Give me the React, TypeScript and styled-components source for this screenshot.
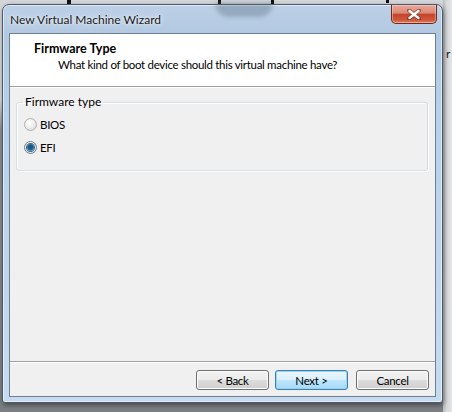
import React from "react";
import styled, { createGlobalStyle } from "styled-components";

const GlobalStyle = createGlobalStyle`
  html, body { margin: 0; padding: 0; }
  body { background: #cfd6de; }
  * { box-sizing: border-box; }
`;

const FONT = `Lato, "Noto Sans", "Liberation Sans", sans-serif`;

const Desktop = styled.div`
  position: relative;
  width: 452px;
  height: 412px;
  overflow: hidden;
  padding: 4px 0 0 2px;
  background:
    linear-gradient(90deg, transparent 0, transparent 443px, #b9bcc0 443px, #d9dadb 447px, #e4e5e6 452px),
    linear-gradient(180deg, #d3d6da 0, #d3d6da 100px, #8d9094 130px, #7c7f83 412px);
  font-family: ${FONT};
`;

const Mark = styled.div<{ $x: number; $w: number; $h: number }>`
  position: absolute;
  top: 0;
  left: ${(p) => p.$x}px;
  width: ${(p) => p.$w}px;
  height: ${(p) => p.$h}px;
  background: #111;
`;

const SideText = styled.div`
  position: absolute;
  left: 446px;
  top: 46px;
  font-size: 12px;
  color: #222;
`;

const Window = styled.div`
  position: relative;
  width: 441px;
  height: 399px;
  border: 1px solid #4e5a66;
  border-radius: 7px 7px 3px 3px;
  background: linear-gradient(180deg, #bcd0e6 0, #b2c9e2 30px, #b8d0ea 120px, #c7dbf0 400px);
  box-shadow: 1px 2px 5px rgba(0, 0, 0, 0.45), inset 0 0 0 1px rgba(255, 255, 255, 0.55);
  padding: 0 6px 5px 6px;
  display: flex;
  flex-direction: column;
`;

const TitleBar = styled.div`
  height: 28px;
  display: flex;
  align-items: flex-start;
  position: relative;
`;

const TitleText = styled.div`
  font-size: 12px;
  color: #1a1a1a;
  margin-top: 7px;
  margin-left: 1px;
  text-shadow: 0 0 8px rgba(255, 255, 255, 0.9), 0 0 3px rgba(255, 255, 255, 0.9);
`;

const GlassBlob = styled.div`
  position: absolute;
  left: 206px;
  top: -2px;
  width: 58px;
  height: 14px;
  border-radius: 0 0 14px 14px;
  background: rgba(80, 100, 120, 0.35);
  filter: blur(2px);
`;

const CloseButton = styled.div`
  margin-left: auto;
  margin-right: -1px;
  width: 46px;
  height: 19px;
  border: 1px solid #6b2a1f;
  border-top: none;
  border-radius: 0 0 5px 5px;
  background: linear-gradient(180deg, #e9a899 0, #dc8873 45%, #c4432b 52%, #cf5a3c 85%, #e2866a 100%);
  box-shadow: inset 0 0 0 1px rgba(255, 220, 210, 0.45);
  display: flex;
  align-items: center;
  justify-content: center;
`;

const Client = styled.div`
  flex: 1;
  background: #f0f0f0;
  border: 1px solid #6d7f93;
  display: flex;
  flex-direction: column;
`;

const Header = styled.div`
  background: #ffffff;
  height: 53px;
  border-bottom: 1px solid #a0a0a0;
  box-shadow: 0 1px 0 #ffffff;
  padding: 7px 0 0 24px;
`;

const HeaderTitle = styled.div`
  font-size: 12.5px;
  font-weight: bold;
  color: #000;
  line-height: 16px;
`;

const HeaderSub = styled.div`
  font-size: 11.5px;
  letter-spacing: -0.3px;
  color: #000;
  line-height: 16px;
  padding-left: 24px;
`;

const Body = styled.div`
  padding: 8px 7px 0 6px;
  flex: 1;
`;

const GroupBox = styled.fieldset`
  margin: 0;
  padding: 4px 0 12px 7px;
  border: 1px solid #d5dfe5;
  border-radius: 3px;
  box-shadow: inset 1px 1px 0 #ffffff, 1px 1px 0 #ffffff;
  height: 76px;
`;

const Legend = styled.legend`
  font-size: 12px;
  color: #000;
  padding: 0 2px;
  margin-left: -1px;
  line-height: 14px;
`;

const OptionRow = styled.label`
  display: flex;
  align-items: center;
  gap: 3px;
  height: 23px;
  font-size: 11.5px;
  letter-spacing: -0.3px;
  color: #000;
`;

const RadioCircle = styled.span<{ $checked?: boolean }>`
  width: 13px;
  height: 13px;
  border-radius: 50%;
  border: 1px solid ${(p) => (p.$checked ? "#6f8192" : "#b0b0b0")};
  background: radial-gradient(circle at 40% 35%, #ffffff 0, #f1f1f1 40%, #d6d6d6 100%);
  display: flex;
  align-items: center;
  justify-content: center;
`;

const RadioDot = styled.span`
  width: 7px;
  height: 7px;
  border-radius: 50%;
  background: radial-gradient(circle at 50% 40%, #1d4f77 0, #1d5f8f 45%, #6ab5df 100%);
  box-shadow: 0 0 0 1px #3b6a8c;
`;

const Separator = styled.div`
  height: 2px;
  border-top: 1px solid #a0a0a0;
  border-bottom: 1px solid #ffffff;
`;

const ButtonRow = styled.div`
  display: flex;
  justify-content: flex-end;
  gap: 6px;
  padding: 7px 6px 6px 0;
`;

const Button = styled.div<{ $default?: boolean; $gapRight?: number }>`
  width: 73px;
  height: 20px;
  border: 1px solid ${(p) => (p.$default ? "#3c7fb1" : "#707070")};
  border-radius: 3px;
  background: ${(p) =>
    p.$default
      ? "linear-gradient(180deg, #eaf6fd 0, #d9f0fc 50%, #bee6fd 51%, #a7d9f5 100%)"
      : "linear-gradient(180deg, #f2f2f2 0, #ebebeb 50%, #dddddd 51%, #cfcfcf 100%)"};
  box-shadow: inset 0 0 0 1px ${(p) => (p.$default ? "#98d3f2" : "#fcfcfc")};
  font-size: 11.5px;
  letter-spacing: -0.3px;
  color: #000;
  display: flex;
  align-items: center;
  justify-content: center;
  margin-right: ${(p) => p.$gapRight ?? 0}px;
`;

export default function App() {
  return (
    <>
      <GlobalStyle />
      <Desktop>
        <Mark $x={67} $w={4} $h={5} />
        <Mark $x={218} $w={3} $h={5} />
        <Mark $x={271} $w={3} $h={5} />
        <Mark $x={386} $w={3} $h={3} />
        <SideText>r</SideText>
        <Window>
          <TitleBar>
            <GlassBlob />
            <TitleText>New Virtual Machine Wizard</TitleText>
            <CloseButton>
              <svg width="14" height="11" viewBox="0 0 14 11">
                <path
                  d="M2 1.5 L12 9.5 M12 1.5 L2 9.5"
                  stroke="#5a1e14"
                  strokeWidth="4"
                  strokeLinecap="round"
                  opacity="0.55"
                />
                <path
                  d="M2.5 2 L11.5 9 M11.5 2 L2.5 9"
                  stroke="#ffffff"
                  strokeWidth="2.4"
                  strokeLinecap="round"
                />
              </svg>
            </CloseButton>
          </TitleBar>
          <Client>
            <Header>
              <HeaderTitle>Firmware Type</HeaderTitle>
              <HeaderSub>What kind of boot device should this virtual machine have?</HeaderSub>
            </Header>
            <Body>
              <GroupBox>
                <Legend>Firmware type</Legend>
                <OptionRow>
                  <RadioCircle />
                  BIOS
                </OptionRow>
                <OptionRow>
                  <RadioCircle $checked>
                    <RadioDot />
                  </RadioCircle>
                  EFI
                </OptionRow>
              </GroupBox>
            </Body>
            <Separator />
            <ButtonRow>
              <Button>&lt; Back</Button>
              <Button $default $gapRight={2}>Next &gt;</Button>
              <Button>Cancel</Button>
            </ButtonRow>
          </Client>
        </Window>
      </Desktop>
    </>
  );
}
